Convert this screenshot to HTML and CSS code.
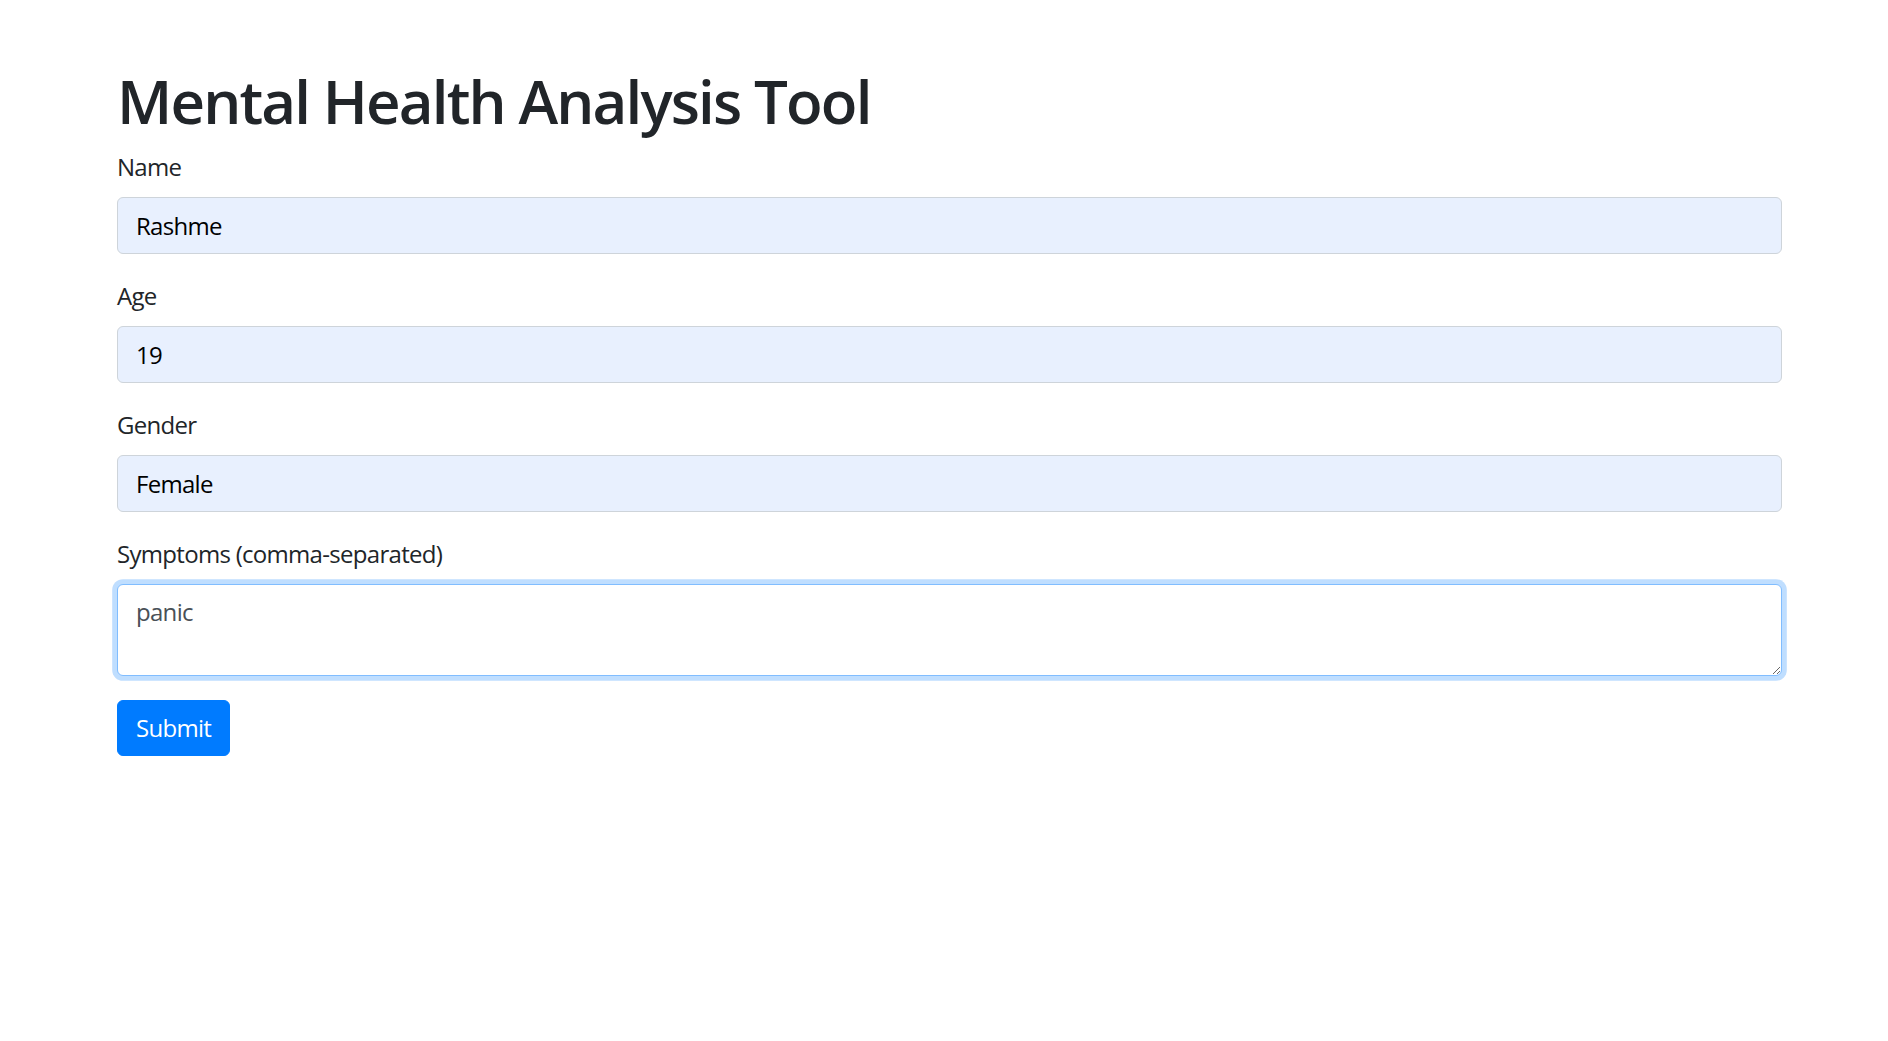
FILE: index.html
```html
<!DOCTYPE html>
<html lang="en">
<head>
<meta charset="utf-8">
<title>Mental Health Analysis Tool</title>
<link rel="stylesheet" href="styles.css">
</head>
<body>
<div class="container">
  <h1 class="title">Mental Health Analysis Tool</h1>
  <form class="form">
    <div class="form-group">
      <label class="label" for="name">Name</label>
      <input class="control autofill" id="name" type="text" value="Rashme">
    </div>
    <div class="form-group">
      <label class="label" for="age">Age</label>
      <input class="control autofill" id="age" type="text" value="19">
    </div>
    <div class="form-group">
      <label class="label" for="gender">Gender</label>
      <input class="control autofill" id="gender" type="text" value="Female">
    </div>
    <div class="form-group">
      <label class="label" for="symptoms">Symptoms (comma-separated)</label>
      <textarea class="control area focused" id="symptoms" rows="2">panic</textarea>
    </div>
    <button class="btn" type="button">Submit</button>
  </form>
</div>
</body>
</html>
```
FILE: styles.css
```css
* { box-sizing: border-box; }
html, body { margin: 0; padding: 0; background: #fff; }
body {
  font-family: "Open Sans", "Noto Sans", sans-serif;
  font-size: 24px;
  line-height: 1.5;
  color: #212529;
  letter-spacing: -0.7px;
}
.container {
  width: 1665px;
  margin-left: 117px;
  padding-top: 65px;
}
.title {
  margin: 0 0 12px 0;
  font-size: 60px;
  font-weight: 600;
  line-height: 1.2;
  letter-spacing: -1.85px;
  color: #212529;
}
.form { margin: 0; }
.form-group {
  display: flex;
  flex-direction: column;
  align-items: flex-start;
  margin-bottom: 24px;
}
.label {
  display: inline-block;
  margin-bottom: 12px;
  height: 36px;
}
.control {
  display: block;
  width: 100%;
  height: 57px;
  padding: 9px 18px;
  font-family: inherit;
  font-size: 24px;
  line-height: 1.5;
  letter-spacing: -0.7px;
  color: #495057;
  background: #fff;
  border: 1px solid #ced4da;
  border-radius: 6px;
  outline: none;
}
.autofill {
  background: #e8f0fe;
  color: #000;
}
.area {
  height: 92px;
  resize: vertical;
}
.focused {
  border-color: #80bdff;
  box-shadow: 0 0 0 4.8px rgba(0, 123, 255, 0.25);
}
.btn {
  display: inline-block;
  height: 56px;
  padding: 9px 18px;
  font-family: inherit;
  font-size: 24px;
  line-height: 1.5;
  letter-spacing: -0.7px;
  color: #fff;
  background: #007bff;
  border: 1px solid #007bff;
  border-radius: 6px;
  cursor: pointer;
}
```
